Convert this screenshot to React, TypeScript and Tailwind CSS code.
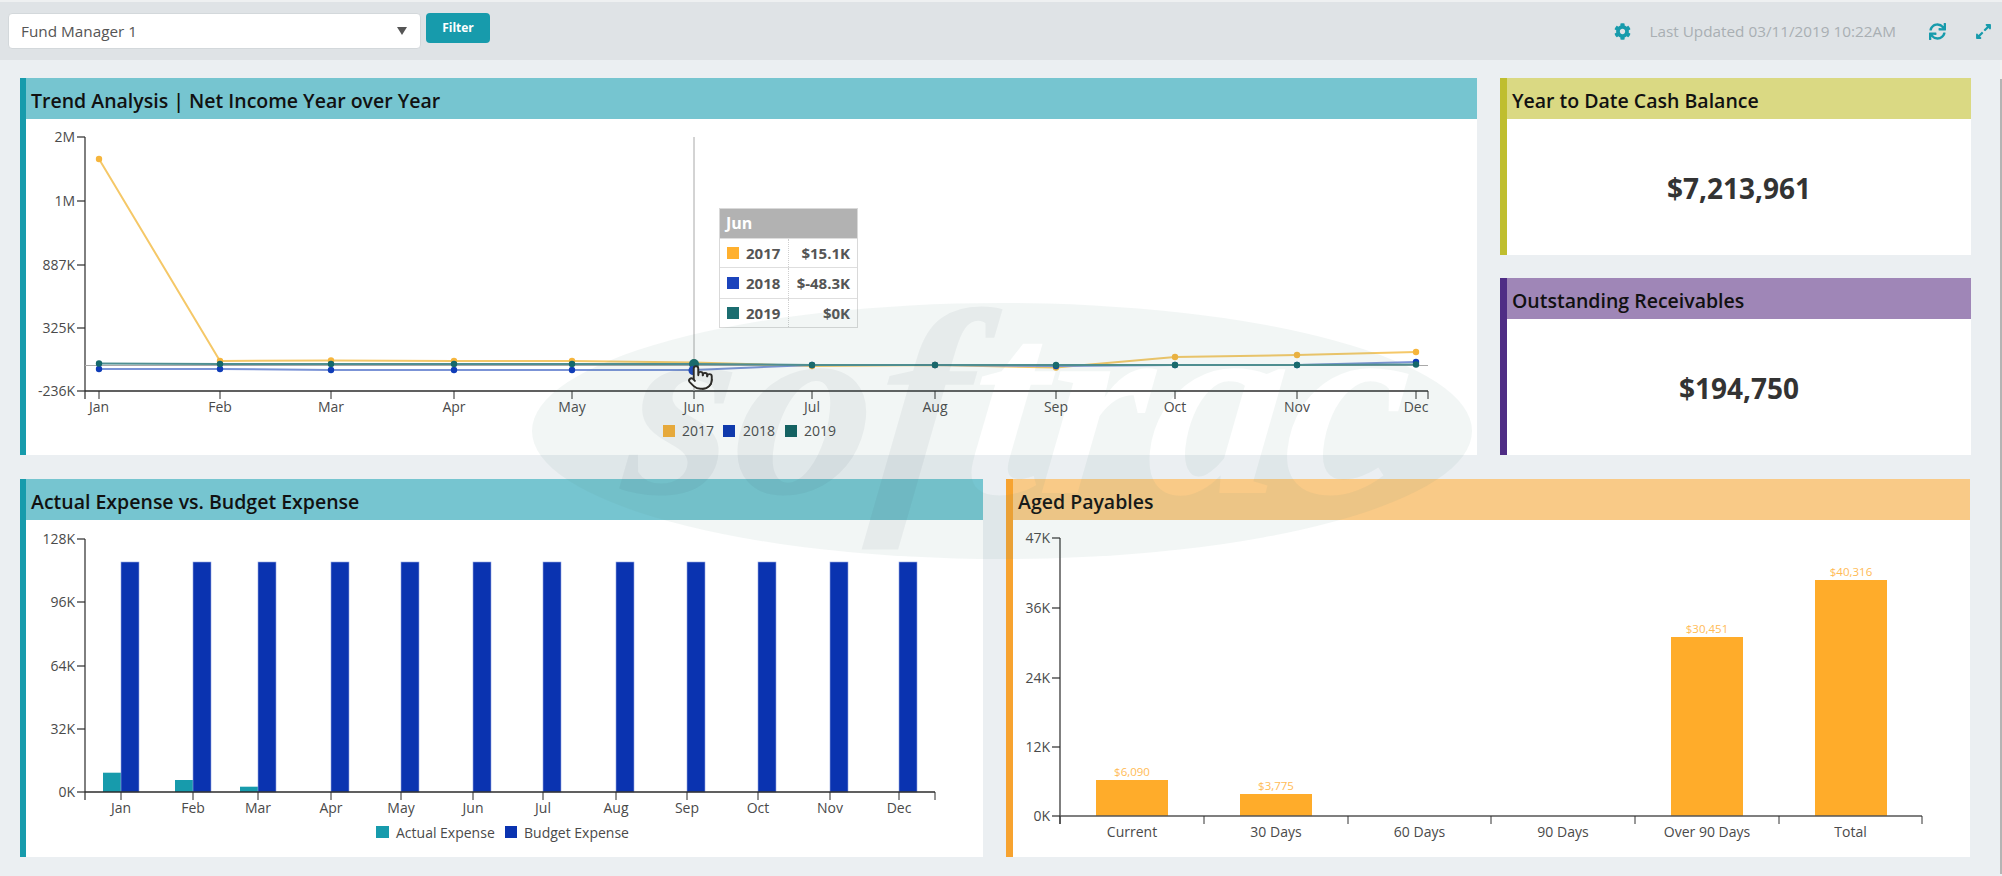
import React from "react";
import { FaCog, FaSync, FaExpandAlt } from "react-icons/fa";
import { Pointer } from "lucide-react";

const AXIS = "#2b2b2b";
const LABEL = "#4a4a4a";

function Card({
  title,
  border,
  header,
  className,
  children,
}: {
  title: string;
  border: string;
  header: string;
  className: string;
  children: React.ReactNode;
}) {
  return (
    <section className={`flex flex-col bg-white ${className}`} style={{ borderColor: border }}>
      <h2
        className="h-[41px] shrink-0 flex items-center pl-[5px] pt-[4px] text-[19.5px] font-semibold text-[#111]"
        style={{ backgroundColor: header }}
      >
        {title}
      </h2>
      <div className="relative flex-1">{children}</div>
    </section>
  );
}

function YAxis({ x, ticks }: { x: number; ticks: [string, number][] }) {
  return (
    <g>
      <line x1={x} x2={x} y1={ticks[0][1]} y2={ticks[ticks.length - 1][1] + 8} stroke={AXIS} strokeWidth={1.2} />
      {ticks.map(([t, y]) => (
        <g key={t}>
          <line x1={x - 8} x2={x} y1={y} y2={y} stroke={AXIS} strokeWidth={1.2} />
          <text x={x - 10} y={y + 5} textAnchor="end" fontSize={14} fill={LABEL}>
            {t}
          </text>
        </g>
      ))}
    </g>
  );
}

const TREND_X = [99, 220, 331, 454, 572, 694, 812, 935, 1056, 1175, 1297, 1416];
const MONTHS = ["Jan", "Feb", "Mar", "Apr", "May", "Jun", "Jul", "Aug", "Sep", "Oct", "Nov", "Dec"];
const SERIES: { line: string; dot: string; ys: number[] }[] = [
  { line: "#f5c868", dot: "#f6b53c", ys: [159, 361, 360.5, 361, 361, 362.5, 366, 365, 367.5, 357, 355, 352] },
  { line: "#7b93d6", dot: "#0f3cb8", ys: [369, 369, 370, 370, 370, 370, 365, 365, 366, 365, 365, 362] },
  { line: "#4f8f92", dot: "#14686b", ys: [363.5, 364, 364, 364, 364, 364, 365, 365, 365, 365, 365, 364.5] },
];

function TrendChart() {
  return (
    <svg className="block" width={1451} height={336} viewBox="26 119 1451 336">
      <YAxis x={85} ticks={[["2M", 137], ["1M", 201], ["887K", 265], ["325K", 328], ["-236K", 391]]} />
      <line x1={85} x2={1428} y1={391} y2={391} stroke={AXIS} strokeWidth={1.5} />
      <line x1={85} x2={1428} y1={365.5} y2={365.5} stroke="#a9a9a9" strokeWidth={1} />
      <line x1={1428} x2={1428} y1={391} y2={399} stroke={AXIS} />
      <line x1={694} x2={694} y1={137} y2={391} stroke="#a8a8a8" strokeWidth={1} />
      {TREND_X.map((x, i) => (
        <g key={x}>
          <line x1={x} x2={x} y1={391} y2={399} stroke={AXIS} />
          <text x={x} y={412} textAnchor="middle" fontSize={14} fill={LABEL}>
            {MONTHS[i]}
          </text>
        </g>
      ))}
      {SERIES.map((s) => (
        <g key={s.line}>
          <polyline
            points={s.ys.map((y, i) => `${TREND_X[i]},${y}`).join(" ")}
            fill="none"
            stroke={s.line}
            strokeWidth={2}
          />
          {s.ys.map((y, i) => (
            <circle key={i} cx={TREND_X[i]} cy={y} r={3.2} fill={s.dot} />
          ))}
        </g>
      ))}
      <circle cx={694} cy={364} r={5} fill="#14686b" />
      <circle cx={693} cy={370.5} r={4.5} fill="#1b46c0" />
      <Pointer x={687} y={363} width={27} height={29} fill="#ffffff" stroke="#2a2320" strokeWidth={1.7} />
      {[
        [663, "#ffb335", "2017", 682],
        [723, "#0a33b0", "2018", 743],
        [785, "#0f5f60", "2019", 804],
      ].map(([x, c, t, tx]) => (
        <g key={t as string}>
          <rect x={x as number} y={425} width={12} height={12} fill={c as string} />
          <text x={tx as number} y={436} fontSize={14} fill={LABEL}>
            {t}
          </text>
        </g>
      ))}
    </svg>
  );
}

const EXP_X = [121, 193, 258, 331, 401, 473, 543, 616, 687, 758, 830, 899];
const ACTUAL_TOPS: [number, number][] = [
  [0, 772.7],
  [1, 780],
  [2, 786.7],
];

function ExpenseChart() {
  return (
    <svg className="block" width={957} height={337} viewBox="26 520 957 337">
      <YAxis x={85} ticks={[["128K", 539], ["96K", 602], ["64K", 666], ["32K", 729], ["0K", 792]]} />
      {ACTUAL_TOPS.map(([i, top]) => (
        <rect key={i} x={EXP_X[i] - 18} y={top} width={18} height={792 - top} fill="#179bac" />
      ))}
      {EXP_X.map((x, i) => (
        <g key={x}>
          <rect x={x} y={562} width={18} height={230} fill="#0a33b0" stroke="#93a6e2" strokeWidth={0.6} />
          <line x1={x} x2={x} y1={792} y2={800} stroke={AXIS} />
          <text x={x} y={813} textAnchor="middle" fontSize={14} fill={LABEL}>
            {MONTHS[i]}
          </text>
        </g>
      ))}
      <line x1={85} x2={935} y1={792} y2={792} stroke={AXIS} strokeWidth={1.3} />
      <line x1={935} x2={935} y1={792} y2={800} stroke={AXIS} />
      <rect x={376} y={826} width={13} height={12} fill="#179bac" />
      <text x={396} y={838} fontSize={14} fill={LABEL}>
        Actual Expense
      </text>
      <rect x={505} y={826} width={12} height={12} fill="#0a33b0" />
      <text x={524} y={838} fontSize={14} fill={LABEL}>
        Budget Expense
      </text>
    </svg>
  );
}

const PAY_TICKS = [1060, 1204, 1348, 1491, 1635, 1779, 1922];
const PAY_CATS = ["Current", "30 Days", "60 Days", "90 Days", "Over 90 Days", "Total"];
const PAY_BARS: [number, number, string][] = [
  [1096, 780, "$6,090"],
  [1240, 794, "$3,775"],
  [1671, 637, "$30,451"],
  [1815, 580, "$40,316"],
];

function PayablesChart() {
  return (
    <svg className="block" width={957} height={337} viewBox="1013 520 957 337">
      <YAxis x={1060} ticks={[["47K", 538], ["36K", 608], ["24K", 678], ["12K", 747], ["0K", 816]]} />
      {PAY_BARS.map(([x, top, label]) => (
        <g key={label}>
          <rect x={x} y={top} width={72} height={816 - top} fill="#ffac2a" />
          <text x={x + 36} y={top - 4} textAnchor="middle" fontSize={11.5} fill="#ffbb55">
            {label}
          </text>
        </g>
      ))}
      <line x1={1060} x2={1922} y1={816} y2={816} stroke="#555" strokeWidth={1.5} />
      {PAY_TICKS.map((x) => (
        <line key={x} x1={x} x2={x} y1={816} y2={824} stroke="#333" />
      ))}
      {PAY_CATS.map((c, i) => (
        <text key={c} x={(PAY_TICKS[i] + PAY_TICKS[i + 1]) / 2} y={837} textAnchor="middle" fontSize={14} fill={LABEL}>
          {c}
        </text>
      ))}
    </svg>
  );
}

const TIP_ROWS = [
  { c: "bg-[#ffb02e]", y: "2017", v: "$15.1K", h: "h-[29px]" },
  { c: "bg-[#1c44bc]", y: "2018", v: "$-48.3K", h: "h-[31px]" },
  { c: "bg-[#1b6d70]", y: "2019", v: "$0K", h: "h-[29px]" },
];

function Tooltip() {
  return (
    <div className="absolute left-[693px] top-[89px] w-[139px] border border-[#d9d9d9] bg-white/90">
      <div className="h-[29px] bg-[#b2b2b2] pl-[6px] text-[16px] leading-[29px] font-bold text-white">Jun</div>
      {TIP_ROWS.map((r) => (
        <div key={r.y} className={`flex items-center border-t border-[#dedede] text-[15px] font-bold text-[#555] ${r.h}`}>
          <div className="flex h-full w-[69px] items-center gap-[7px] pl-[7px] border-r border-dotted border-[#cfcfcf]">
            <span className={`h-[12px] w-[12px] ${r.c}`} />
            <span>{r.y}</span>
          </div>
          <div className="flex-1 pr-[7px] text-right">{r.v}</div>
        </div>
      ))}
    </div>
  );
}

function Watermark() {
  return (
    <svg
      className="pointer-events-none absolute left-0 top-0"
      width={2002}
      height={876}
      viewBox="0 0 2002 876"
      fontFamily="'Liberation Serif', serif"
      fontStyle="italic"
      fontWeight={700}
    >
      <defs>
        <mask id="cut" maskUnits="userSpaceOnUse" x={0} y={0} width={2002} height={876}>
          <rect x={0} y={0} width={2002} height={876} fill="#fff" />
          <g transform="skewX(-6)">
            <text x={1012} y={493} fontSize={265} fill="#000" textLength={440} lengthAdjust="spacingAndGlyphs">
              trac
            </text>
          </g>
        </mask>
      </defs>
      <ellipse cx={1002} cy={431} rx={470} ry={128} fill="rgb(92,142,130)" fillOpacity={0.08} mask="url(#cut)" />
      <g transform="skewX(-6)">
        <text x={672} y={493} fontSize={265} fill="rgb(50,60,90)" fillOpacity={0.06} textLength={340} lengthAdjust="spacingAndGlyphs">
          sof
        </text>
      </g>
    </svg>
  );
}

export default function App() {
  return (
    <div className="relative h-[876px] w-[2002px] overflow-hidden bg-[#ebeff2] text-[#333] [font-family:'Open_Sans',sans-serif]">
      <header className="flex h-[60px] items-start border-t-2 border-[#eef0f1] bg-[#dfe3e6]">
        <div className="ml-[8px] mt-[11px] flex h-[36px] w-[413px] items-center justify-between rounded-[4px] border border-[#d3d8db] bg-white pl-[12px] pr-[13px] text-[15.3px] text-[#555]">
          <span>Fund Manager 1</span>
          <svg width="10" height="8" viewBox="0 0 10 8">
            <path d="M0 0h10L5 8z" fill="#555" />
          </svg>
        </div>
        <button className="ml-[5px] mt-[11px] h-[30px] w-[64px] rounded-[4px] bg-[#179bac] text-[12px] font-bold text-white">
          Filter
        </button>
        <div className="ml-auto mt-[19px] flex h-[20px] items-center pr-[10px] text-[#179bac]">
          <FaCog size={17} />
          <span className="ml-[18px] text-[15.3px] text-[#a9afb3]">Last Updated 03/11/2019 10:22AM</span>
          <FaSync size={17} className="ml-[33px]" />
          <FaExpandAlt size={17} className="ml-[29px]" />
        </div>
      </header>
      <div className="flex h-[814px]">
        <main className="flex flex-1 flex-col gap-[24px] pl-[20px] pt-[18px]">
          <div className="flex gap-[23px]">
            <Card title="Trend Analysis | Net Income Year over Year" border="#179bac" header="#76c5d0" className="h-[377px] w-[1457px] border-l-[6px]">
              <TrendChart />
              <Tooltip />
            </Card>
            <div className="flex w-[471px] flex-col gap-[23px]">
              <Card title="Year to Date Cash Balance" border="#bfbe2f" header="#dad983" className="h-[177px] border-l-[7px]">
                <div className="flex h-full items-center justify-center pt-[2px] text-[28px] font-bold">$7,213,961</div>
              </Card>
              <Card title="Outstanding Receivables" border="#4f2d85" header="#9f86b7" className="h-[177px] border-l-[7px]">
                <div className="flex h-full items-center justify-center pt-[2px] text-[28px] font-bold">$194,750</div>
              </Card>
            </div>
          </div>
          <div className="flex gap-[23px]">
            <Card title="Actual Expense vs. Budget Expense" border="#179bac" header="#76c5d0" className="h-[378px] w-[963px] border-l-[6px]">
              <ExpenseChart />
            </Card>
            <Card title="Aged Payables" border="#f7a330" header="#f9ca87" className="h-[378px] w-[964px] border-l-[7px]">
              <PayablesChart />
            </Card>
          </div>
        </main>
        <div className="flex w-[2px] flex-col">
          <div className="h-[19px] bg-[#f1f1f1]" />
          <div className="flex-1 bg-[#b4b4b4]" />
        </div>
      </div>
      <Watermark />
    </div>
  );
}
